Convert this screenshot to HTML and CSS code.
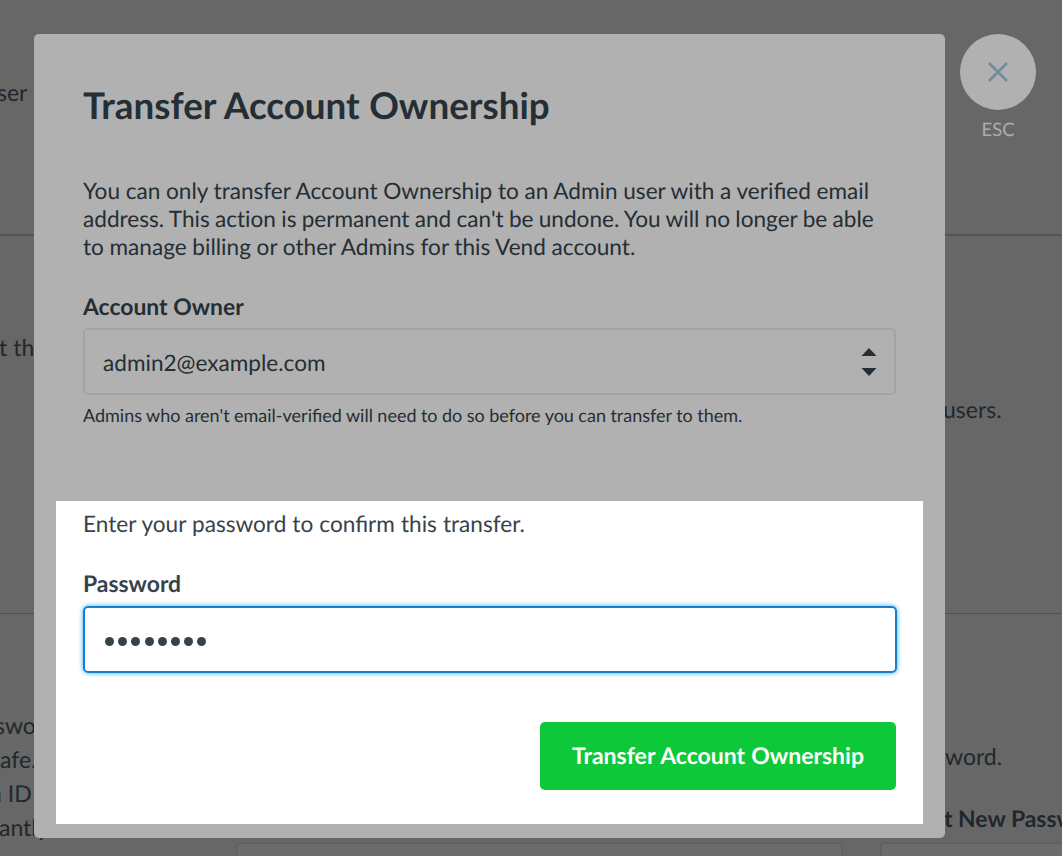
FILE: index.html
```html
<!DOCTYPE html>
<html lang="en">
<head>
<meta charset="utf-8">
<title>Transfer Account Ownership</title>
<link rel="stylesheet" href="styles.css">
</head>
<body>
<main class="page">
  <section class="band band-first">
    <p class="copy copy-user">ser</p>
  </section>
  <section class="band band-second">
    <p class="copy copy-the">t the</p>
    <p class="copy copy-users">users.</p>
  </section>
  <section class="band band-third">
    <div class="aside">
      <p class="copy line-a">swor</p>
      <p class="copy line-b">afe.</p>
      <p class="copy line-c">n ID</p>
      <p class="copy line-d">antly</p>
    </div>
    <div class="settings">
      <p class="copy copy-word">word.</p>
      <p class="copy copy-new">t New Password</p>
      <div class="fields"><div class="blank"></div><div class="blank"></div></div>
    </div>
  </section>
</main>
<div class="overlay">
  <div class="modal" role="dialog">
    <h1 class="title"><span>Transfer Account Ownership</span></h1>
    <p class="text intro"><span>You can only transfer Account Ownership to an Admin user with a verified email</span><br><span class="tight">address. This action is permanent and can't be undone. You will no longer be able</span><br><span>to manage billing or other Admins for this Vend account.</span></p>
    <div class="label"><span>Account Owner</span></div>
    <div class="select">
      <span class="text">admin2@example.com</span>
      <svg class="arrows" width="16" height="30" viewBox="0 0 16 30"><path d="M.5 9 8 1l7.500 8zM.5 21 8 29l7.500-8z"/></svg>
    </div>
    <p class="hint"><span>Admins who aren't email-verified will need to do so before you can transfer to them.</span></p>
    <div class="confirm">
      <p class="text prompt"><span>Enter your password to confirm this transfer.</span></p>
      <div class="label pw-label"><span>Password</span></div>
      <div class="password"><i></i><i></i><i></i><i></i><i></i><i></i><i></i><i></i></div>
      <button class="submit"><span>Transfer Account Ownership</span></button>
    </div>
  </div>
  <div class="closer">
    <button class="close" aria-label="Close"><svg width="22" height="22" viewBox="0 0 22 22"><path d="M2 2l18 18M20 2 2 20"/></svg></button>
    <span class="esc">ESC</span>
  </div>
</div>
</body>
</html>
```
FILE: styles.css
```css
* { box-sizing: border-box; }
body {
  margin: 0;
  position: relative;
  width: 1062px;
  height: 856px;
  overflow: hidden;
  font-family: Lato, sans-serif;
  font-size: 23px;
  line-height: 28px;
  text-rendering: geometricPrecision;
  color: #242e34;
  background: #676767;
}
p, h1 { margin: 0; font-weight: 400; }
.page { height: 856px; overflow: hidden; }
.copy { color: #20282d; white-space: nowrap; }
.band-first { height: 236px; padding-top: 78px; border-bottom: 2px solid #505657; }
.band-second { height: 378px; padding-top: 97px; border-bottom: 1px solid #4c5355; }
.band-third { display: flex; height: 242px; }
.copy-user { margin-left: -3px; }
.copy-the { margin-left: -1px; }
.copy-users { margin: 34px 0 0 943px; }
.aside { width: 236px; padding-top: 94px; line-height: 34px; }
.line-a { margin-left: -5px; }
.line-b { margin-left: 0; }
.line-c { margin-left: -11px; }
.line-d { margin-left: -1px; }
.settings { width: 826px; padding-top: 128px; }
.copy-word { margin-left: 709px; }
.copy-new { margin: 34px 0 10px 708px; font-size: 22.900px; font-weight: 700; }
.fields { display: flex; gap: 37px; }
.blank {
  flex: 0 0 607px;
  height: 66px;
  border: 2px solid #5f6162;
  border-radius: 5px;
  background: #6e6b6e;
}
.overlay {
  position: absolute;
  inset: 0;
  display: flex;
  align-items: flex-start;
  gap: 15px;
  padding: 34px;
}
.modal {
  flex: 0 0 911px;
  height: 804px;
  padding: 47px 49px 0;
  border-radius: 5px;
  background: #b1b1b1;
}
.title { font-size: 36.8px; line-height: 48px; font-weight: 700; word-spacing: .4px; }
.text { font-size: 22.6px; }
.intro {
  margin-top: 48px;
  white-space: nowrap;
  word-spacing: -.1px;
}
.tight { font-variant-ligatures: none; word-spacing: -.5px; }
.prompt { word-spacing: .3px; }
.label { margin-top: 31px; font-size: 22.900px; font-weight: 700; }
.select {
  display: flex;
  justify-content: space-between;
  align-items: center;
  height: 67px;
  margin-top: 8px;
  padding: 0 17px 0 18px;
  border: 2px solid #a3a4a5;
  border-radius: 5px;
}
.select .text { padding-top: 2px; }
.arrows { fill: #242e34; }
.hint { margin-top: 7px; font-size: 18px; line-height: 26px; white-space: nowrap; word-spacing: -.15px; }
.confirm {
  height: 323px;
  margin: 73px -27px 0 -27px;
  padding: 9px 26px 0 27px;
  background: #fff;
  color: #36434b;
}
.password {
  display: flex;
  align-items: center;
  gap: 4.200px;
  width: 814px;
  height: 67px;
  margin-top: 9px;
  padding: 4px 20px 0;
  border: 2px solid #1380d8;
  border-radius: 5px;
  box-shadow: 0 0 5px #36aaf3;
}
.password i { width: 9px; height: 9px; border-radius: 50%; background: #36434b; }
.submit {
  display: block;
  width: 356px;
  height: 68px;
  margin: 49px 0 0 457px;
  padding: 0 0 2px;
  border: 0;
  border-radius: 5px;
  background: #0dc939;
  color: #fff;
  font: 700 23px/28px Lato, sans-serif;
  text-rendering: geometricPrecision;
  word-spacing: .4px;
}
.closer { display: flex; flex-direction: column; align-items: center; width: 76px; }
.close {
  display: flex;
  align-items: center;
  justify-content: center;
  width: 76px;
  height: 76px;
  padding: 0;
  border: 0;
  border-radius: 50%;
  background: #b1b1b1;
}
.close path { fill: none; stroke: #718c9b; stroke-width: 2.700; }
.esc { margin-top: 6px; font-size: 18.500px; line-height: 26px; color: #adadad; }
```
